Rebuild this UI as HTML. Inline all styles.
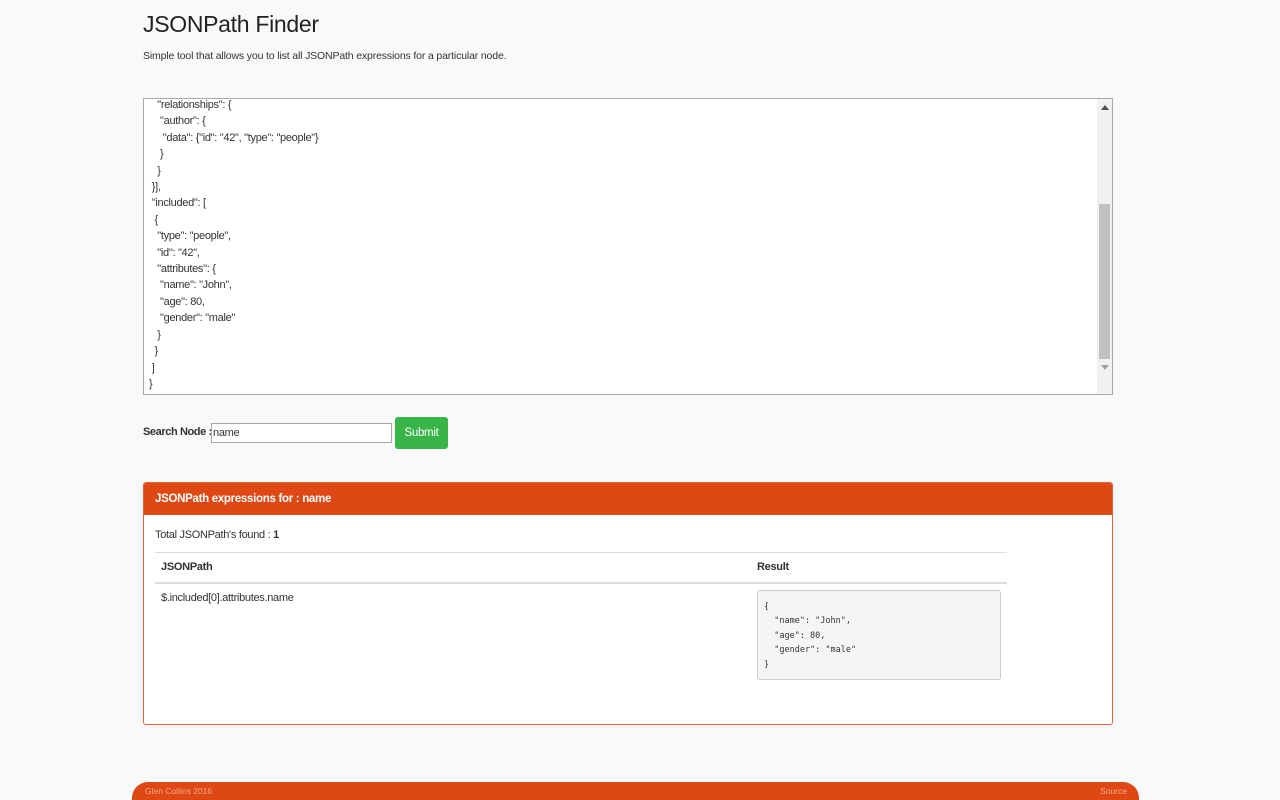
<!DOCTYPE html>
<html><head><meta charset="utf-8"><style>
html{overflow:hidden;height:800px}
body{margin:0;background:#f8f9fa;font-family:"Liberation Sans","DejaVu Sans",sans-serif;color:#333;width:1280px;height:800px;overflow:hidden;position:relative}
.a{position:absolute}
h1{position:absolute;left:143px;top:11px;margin:0;font-weight:normal;font-size:23px;letter-spacing:-0.3px;color:#222}
.sub{left:143px;top:50px;font-size:10.5px;letter-spacing:-0.15px}
.ta{left:143px;top:98px;width:968px;height:295px;border:1px solid #a9a9a9;background:#fff;overflow:hidden}
.ta pre{margin:0;position:absolute;left:5px;top:-2px;font-family:"Liberation Sans",sans-serif;font-size:11px;letter-spacing:-0.3px;line-height:16.4px;color:#333;tab-size:4}
.sb{left:953px;top:0;width:15px;height:295px;background:#f1f1f1}
.th{left:2px;top:105px;width:11px;height:155px;background:#c1c1c1}
.lbl{left:143px;top:426px;font-size:11px;letter-spacing:-0.4px;font-weight:bold}
.inp{left:211px;top:423px;border:1px solid #a9a9a9;background:#fff;font-size:11px;letter-spacing:-0.3px;line-height:18px;padding-left:1px;box-sizing:border-box;width:181px;height:20px}
.btn{left:395px;top:417px;width:53px;height:32px;background:#38b449;border-radius:3px;color:#fff;font-size:11.5px;letter-spacing:-0.3px;text-align:center;line-height:32px}
.panel{left:143px;top:482px;width:968px;height:241px;border:1px solid #e8623a;border-radius:3px;background:#fff;overflow:hidden}
.ph{left:0;top:0;width:968px;height:32px;background:#dd4814;color:#fff;font-size:11.5px;letter-spacing:-0.3px;font-weight:bold;line-height:32px;text-indent:11px}
.pre{left:613px;top:107px;width:244px;height:90px;background:#f5f5f5;border:1px solid #ccc;border-radius:3px;box-sizing:border-box}
.pre pre{margin:0;position:absolute;left:6px;top:9px;font-family:"DejaVu Sans Mono",monospace;font-size:8.5px;line-height:14.4px;color:#333}
.foot{left:132px;top:782px;width:1007px;height:18px;background:#dd4814;border-radius:16px 16px 0 0;font-size:8.5px;color:#f4a88a}
.s{font-size:11px;letter-spacing:-0.3px}
</style></head><body>
<h1>JSONPath Finder</h1>
<div class="a sub">Simple tool that allows you to list all JSONPath expressions for a particular node.</div>
<div class="a ta"><pre>   "relationships": {
    "author": {
     "data": {"id": "42", "type": "people"}
    }
   }
 }],
 "included": [
  {
   "type": "people",
   "id": "42",
   "attributes": {
    "name": "John",
    "age": 80,
    "gender": "male"
   }
  }
 ]
}</pre>
<div class="a sb"><div class="a" style="left:4px;top:6px;border:4px solid transparent;border-bottom:5px solid #505050;border-top:0"></div><div class="a th"></div><div class="a" style="left:4px;top:266px;border:4px solid transparent;border-top:5px solid #a0a0a0;border-bottom:0"></div></div>
</div>
<div class="a lbl">Search Node :</div>
<div class="a inp">name</div>
<div class="a btn">Submit</div>
<div class="a panel">
<div class="a ph">JSONPath expressions for : name</div>
<div class="a s" style="left:11px;top:46px">Total JSONPath's found : <b>1</b></div>
<div class="a" style="left:11px;top:69px;width:852px;border-top:1px solid #ddd"></div>
<div class="a s" style="left:17px;top:78px;font-weight:bold">JSONPath</div>
<div class="a s" style="left:613px;top:78px;font-weight:bold">Result</div>
<div class="a" style="left:11px;top:99px;width:852px;border-top:2px solid #ddd"></div>
<div class="a s" style="left:17px;top:109px">$.included[0].attributes.name</div>
<div class="a pre"><pre>{
  "name": "John",
  "age": 80,
  "gender": "male"
}</pre></div>
</div>
<div class="a foot"><span class="a" style="left:13px;top:4px">Glen Collins 2016</span><span class="a" style="right:12px;top:4px">Source</span></div>
</body></html>
